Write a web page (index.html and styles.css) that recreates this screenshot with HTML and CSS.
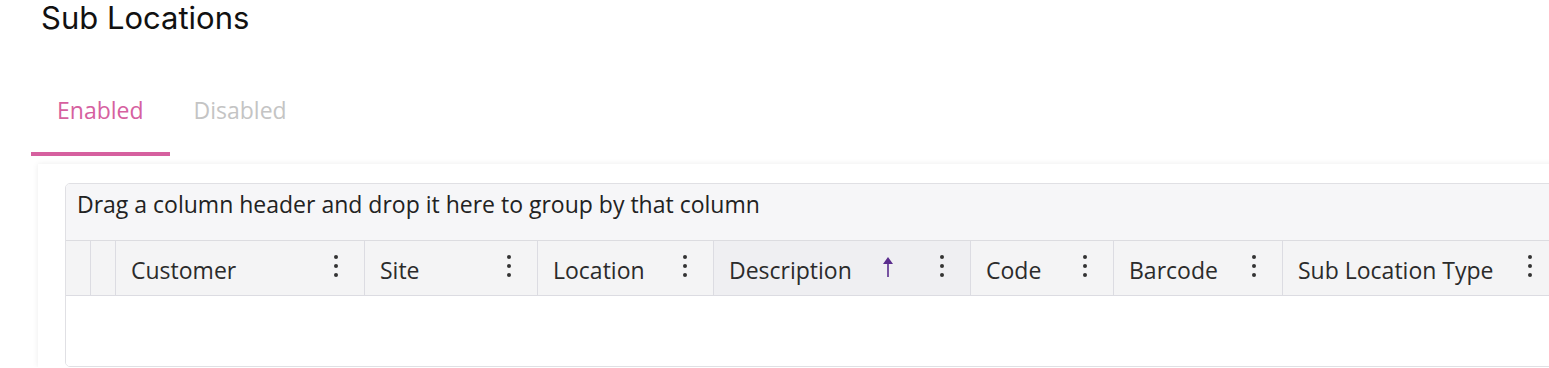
FILE: index.html
```html
<!DOCTYPE html>
<html lang="en">
<head>
    <meta charset="UTF-8">
    <meta name="viewport" content="width=device-width, initial-scale=1.0">
    <title>Sub Locations</title>
    <link rel="stylesheet" href="styles.css">
</head>
<body>

<div class="page">
    <h2 class="pageTitle">Sub Locations</h2>

    <div class="tabs">
        <div class="tab active">Enabled</div>
        <div class="tab">Disabled</div>
    </div>

    <div class="card">
        <div class="grid">
            <div class="groupPanel">Drag a column header and drop it here to group by that column</div>

            <div class="headerRow">
                <div class="hcell"></div>
                <div class="hcell"></div>
                <div class="hcell col">
                    <span class="colName">Customer</span>
                    <svg class="kebab" width="4" height="22" viewBox="0 0 4 22"><circle cx="2" cy="2" r="2"/><circle cx="2" cy="11" r="2"/><circle cx="2" cy="20" r="2"/></svg>
                </div>
                <div class="hcell col">
                    <span class="colName">Site</span>
                    <svg class="kebab" width="4" height="22" viewBox="0 0 4 22"><circle cx="2" cy="2" r="2"/><circle cx="2" cy="11" r="2"/><circle cx="2" cy="20" r="2"/></svg>
                </div>
                <div class="hcell col">
                    <span class="colName">Location</span>
                    <svg class="kebab" width="4" height="22" viewBox="0 0 4 22"><circle cx="2" cy="2" r="2"/><circle cx="2" cy="11" r="2"/><circle cx="2" cy="20" r="2"/></svg>
                </div>
                <div class="hcell col sorted">
                    <span class="colName">Description</span>
                    <svg class="sortArrow" width="10" height="20" viewBox="0 0 10 20"><path d="M5 0 L10 7 L5.8 7 L5.8 20 L4.2 20 L4.2 7 L0 7 Z"/></svg>
                    <svg class="kebab" width="4" height="22" viewBox="0 0 4 22"><circle cx="2" cy="2" r="2"/><circle cx="2" cy="11" r="2"/><circle cx="2" cy="20" r="2"/></svg>
                </div>
                <div class="hcell col">
                    <span class="colName">Code</span>
                    <svg class="kebab" width="4" height="22" viewBox="0 0 4 22"><circle cx="2" cy="2" r="2"/><circle cx="2" cy="11" r="2"/><circle cx="2" cy="20" r="2"/></svg>
                </div>
                <div class="hcell col">
                    <span class="colName">Barcode</span>
                    <svg class="kebab" width="4" height="22" viewBox="0 0 4 22"><circle cx="2" cy="2" r="2"/><circle cx="2" cy="11" r="2"/><circle cx="2" cy="20" r="2"/></svg>
                </div>
                <div class="hcell col">
                    <span class="colName">Sub Location Type</span>
                    <svg class="kebab" width="4" height="22" viewBox="0 0 4 22"><circle cx="2" cy="2" r="2"/><circle cx="2" cy="11" r="2"/><circle cx="2" cy="20" r="2"/></svg>
                </div>
            </div>

            <div class="gridContent"></div>
        </div>
    </div>
</div>

</body>
</html>
```

FILE: styles.css
```css
body {
    margin: 0;
    background: #ffffff;
    overflow: hidden;
    font-family: "Open Sans", "Noto Sans", sans-serif;
}
.page {
    padding-left: 31px;
    overflow: hidden;
}
.pageTitle {
    font-family: Inter, "Noto Sans", sans-serif;
    font-weight: 400;
    font-size: 31px;
    line-height: 36px;
    color: #111;
    margin: 0 0 28px 10px;
}
.tabs {
    display: flex;
    height: 92px;
}
.tab {
    display: flex;
    align-items: center;
    padding: 4px 26px 0 26px;
    font-size: 23px;
    color: #c4c4c4;
    border-bottom: 4px solid transparent;
    box-sizing: border-box;
}
.tab.active {
    color: #d6609f;
    border-bottom-color: #d6609f;
}
.tab + .tab {
    padding-left: 24px;
}
.card {
    margin: 8px -40px 0 7px;
    padding: 19px 0 0 27px;
    background: #fff;
    box-shadow: 0 0 6px rgba(0, 0, 0, 0.08);
}
.grid {
    border: 1px solid #e0e0e4;
    border-radius: 5px;
    overflow: hidden;
}
.groupPanel {
    background: #f6f6f8;
    height: 57px;
    padding: 4px 11px 0;
    box-sizing: border-box;
    font-size: 23px;
    color: #222;
    border-bottom: 1px solid #dcdce0;
}
.headerRow {
    display: grid;
    grid-template-columns: 24px 25px 249px 173px 176px 257px 143px 169px 1fr;
    height: 55px;
    background: #f4f4f5;
    border-bottom: 1px solid #dcdce2;
    box-sizing: border-box;
}
.hcell {
    border-left: 1px solid #dcdce2;
}
.hcell:first-child {
    border-left: none;
}
.col {
    display: flex;
    align-items: center;
    padding: 0 26px 0 15px;
    font-size: 23px;
    color: #2b2b2b;
}
.col:last-child {
    padding-right: 56px;
}
.col.sorted {
    background: #efeff2;
}
.colName {
    flex: 1;
    margin-top: 4px;
}
.kebab {
    fill: #333;
    margin-top: -4px;
}
.sortArrow {
    fill: #5b2d8e;
    margin-right: 47px;
    margin-top: -2px;
}
.gridContent {
    height: 70px;
    background: #fff;
}
```
